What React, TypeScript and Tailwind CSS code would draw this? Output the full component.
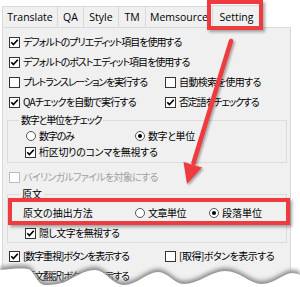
import React from "react";

function Check({ checked = false, disabled = false }: { checked?: boolean; disabled?: boolean }) {
  return (
    <span
      className={
        disabled
          ? "w-[11px] h-[11px] border border-[#bcbcbc] bg-white flex items-center justify-center shrink-0"
          : "w-[11px] h-[11px] border border-[#333333] bg-white flex items-center justify-center shrink-0"
      }
    >
      {checked && (
        <svg width="9" height="9" viewBox="0 0 9 9">
          <path d="M1.3 4.3 L3.4 6.6 L7.8 1.8" stroke="#000" strokeWidth="1.7" fill="none" />
        </svg>
      )}
    </span>
  );
}

function Radio({ checked = false }: { checked?: boolean }) {
  return (
    <span className="w-[10px] h-[10px] rounded-full border border-[#555555] bg-white flex items-center justify-center shrink-0">
      {checked && <span className="w-[4px] h-[4px] rounded-full bg-black" />}
    </span>
  );
}

function CheckItem({
  checked,
  disabled,
  t = "",
  children,
}: {
  checked?: boolean;
  disabled?: boolean;
  t?: string;
  children: React.ReactNode;
}) {
  return (
    <span className="flex items-center gap-[3px] whitespace-nowrap">
      <Check checked={checked} disabled={disabled} />
      <span className={disabled ? `text-[#a0a0a0] ${t}` : `text-black ${t}`}>{children}</span>
    </span>
  );
}

function RadioItem({ checked, t = "", children }: { checked?: boolean; t?: string; children: React.ReactNode }) {
  return (
    <span className="flex items-center gap-[3px] whitespace-nowrap">
      <Radio checked={checked} />
      <span className={t}>{children}</span>
    </span>
  );
}

export default function App() {
  return (
    <div className="relative w-[300px] h-[287px] overflow-hidden bg-white font-['Noto_Sans_CJK_JP',sans-serif] [font-feature-settings:'palt'] text-[10px] leading-none text-black">
      {/* tab strip */}
      <div className="flex items-end h-[27px] pl-[2px] font-['Open_Sans',sans-serif] text-[10.5px] [font-feature-settings:normal]">
        <div className="w-[56px] h-[21px] flex items-center justify-center border border-b-0 border-[#d9d9d9] bg-[#f0f0f0]">Translate</div>
        <div className="w-[27px] h-[21px] -ml-px flex items-center justify-center border border-b-0 border-[#d9d9d9] bg-[#f0f0f0]">QA</div>
        <div className="w-[36px] h-[21px] -ml-px flex items-center justify-center border border-b-0 border-[#d9d9d9] bg-[#f0f0f0]">Style</div>
        <div className="w-[28px] h-[21px] -ml-px flex items-center justify-center border border-b-0 border-[#d9d9d9] bg-[#f0f0f0]">TM</div>
        <div className="w-[68px] h-[21px] -ml-px flex items-center justify-center border border-b-0 border-[#d9d9d9] bg-[#f0f0f0]">Memsource</div>
        <div className="w-[49px] h-[23px] -ml-px -mb-px relative z-10 flex items-center justify-center border border-b-0 border-[#d9d9d9] bg-[#f0f0f0]">Setting</div>
      </div>

      {/* panel */}
      <div className="ml-[2px] w-[289px] h-[262px] border border-[#d9d9d9] bg-[#f0f0f0] pt-[4px] flex flex-col">
        <div className="h-[20px] flex items-center pl-[6px]">
          <CheckItem checked t="tracking-[-1px]">デフォルトのプリエディット項目を使用する</CheckItem>
        </div>
        <div className="h-[20px] flex items-center pl-[6px]">
          <CheckItem checked t="tracking-[-1px]">デフォルトのポストエディット項目を使用する</CheckItem>
        </div>
        <div className="h-[20px] flex items-center pl-[6px]">
          <div className="w-[156px]">
            <CheckItem t="tracking-[-1.2px]">プレトランスレーションを実行する</CheckItem>
          </div>
          <CheckItem t="tracking-[-0.6px]">自動検索を使用する</CheckItem>
        </div>
        <div className="h-[20px] flex items-center pl-[6px]">
          <div className="w-[156px]">
            <CheckItem checked t="tracking-[-0.8px]">QAチェックを自動で実行する</CheckItem>
          </div>
          <CheckItem checked t="tracking-[-1.2px]">否定語をチェックする</CheckItem>
        </div>

        <fieldset className="mt-[1px] ml-[4px] w-[280px] border border-[#dcdcdc] pb-[2px]">
          <legend className="ml-[11px] px-[2px] h-[14px] leading-[14px] tracking-[-1.2px]">数字と単位をチェック</legend>
          <div className="h-[17px] flex items-center pl-[18px]">
            <div className="w-[109px]">
              <RadioItem t="tracking-[-1.2px]">数字のみ</RadioItem>
            </div>
            <RadioItem checked t="tracking-[-0.4px]">数字と単位</RadioItem>
          </div>
          <div className="h-[16px] flex items-center pl-[17px]">
            <CheckItem checked t="tracking-[-0.3px]">桁区切りのコンマを無視する</CheckItem>
          </div>
        </fieldset>

        <div className="mt-[4px] h-[20px] flex items-center pl-[6px]">
          <CheckItem disabled t="tracking-[-0.7px]">バイリンガルファイルを対象にする</CheckItem>
        </div>

        <fieldset className="ml-[4px] w-[280px] border border-[#dcdcdc] pb-[1px]">
          <legend className="ml-[12px] px-[2px] h-[14px] leading-[14px]">原文</legend>
          <div className="h-[24px] flex items-center pl-[15px]">
            <span className="w-[112px]">原文の抽出方法</span>
            <div className="w-[74px]">
              <RadioItem t="tracking-[-0.5px]">文章単位</RadioItem>
            </div>
            <RadioItem checked>段落単位</RadioItem>
          </div>
          <div className="h-[16px] flex items-center pl-[17px]">
            <CheckItem checked t="tracking-[-0.6px]">隠し文字を無視する</CheckItem>
          </div>
        </fieldset>

        <div className="mt-[3px] h-[20px] flex items-center pl-[6px]">
          <div className="w-[156px]">
            <CheckItem checked t="tracking-[-1.1px]">[数字重視]ボタンを表示する</CheckItem>
          </div>
          <CheckItem t="tracking-[-0.5px]">[取得]ボタンを表示する</CheckItem>
        </div>
        <div className="h-[20px] flex items-center pl-[6px]">
          <CheckItem checked t="tracking-[-1.1px]">[原文翻訳]ボタンを表示する</CheckItem>
        </div>
      </div>

      {/* red highlight: Setting tab */}
      <div className="absolute left-[207px] top-0 w-[56px] h-[30px] border-[4px] border-[#ee3b3f] shadow-[2px_2px_3px_rgba(0,0,0,0.35)] z-20" />
      {/* red highlight: extraction row */}
      <div className="absolute left-[8px] top-[198px] w-[282px] h-[27px] border-[4px] border-[#ee3b3f] shadow-[2px_2px_3px_rgba(0,0,0,0.35)] z-20" />

      {/* arrow */}
      <svg className="absolute left-0 top-0 z-30" width="300" height="287" viewBox="0 0 300 287">
        <defs>
          <filter id="ash" x="-20%" y="-20%" width="140%" height="140%">
            <feDropShadow dx="1.5" dy="1.5" stdDeviation="1.2" floodColor="#000" floodOpacity="0.35" />
          </filter>
        </defs>
        <g filter="url(#ash)">
          <line x1="231" y1="41" x2="193.5" y2="163" stroke="#ee3b3f" strokeWidth="4.5" strokeLinecap="round" />
          <polygon points="187,184 202,167.5 183.5,162" fill="#ee3b3f" />
        </g>
      </svg>

      {/* torn paper edge */}
      <svg className="absolute left-0 bottom-0 z-40" width="300" height="24" viewBox="0 0 300 24">
        <defs>
          <filter id="tblur" x="-5%" y="-50%" width="110%" height="200%">
            <feGaussianBlur stdDeviation="2" />
          </filter>
        </defs>
        <path
          transform="translate(0,-3)"
          filter="url(#tblur)"
          fill="#8a8a8a"
          d="M0,7 C10,6 20,5 28,6 C34,7 37,22 45,22 C54,22 59,21 65,19 C75,14 84,7 95,7 C106,7 112,22 124,22 C136,22 148,9 158,9 C168,9 174,21 184,21 C198,21 212,8 225,8 C240,8 250,21 262,21 C274,21 284,10 292,10 C296,10 298,11 300,12 L300,30 L0,30 Z"
        />
        <path
          fill="#ffffff"
          d="M0,7 C10,6 20,5 28,6 C34,7 37,22 45,22 C54,22 59,21 65,19 C75,14 84,7 95,7 C106,7 112,22 124,22 C136,22 148,9 158,9 C168,9 174,21 184,21 C198,21 212,8 225,8 C240,8 250,21 262,21 C274,21 284,10 292,10 C296,10 298,11 300,12 L300,24 L0,24 Z"
        />
      </svg>
    </div>
  );
}
